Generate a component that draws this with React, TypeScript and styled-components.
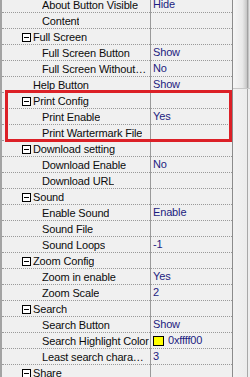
import React from "react";
import styled, { createGlobalStyle } from "styled-components";

const Global = createGlobalStyle`
  html, body { margin: 0; padding: 0; background: #f0f0f0; }
  body { font-family: "Liberation Sans", Arial, sans-serif; }
`;

const Frame = styled.div`
  position: relative;
  width: 250px;
  height: 377px;
  overflow: hidden;
  display: flex;
  background: #f0f0f0;
`;

const Grid = styled.div`
  flex: 1;
  display: flex;
  flex-direction: column;
  margin-top: -3px;
  border-left: 2px solid #a3a3a3;
  border-right: 1px solid #8c8c8c;
`;

const Row = styled.div`
  display: grid;
  grid-template-columns: 149px 1fr;
  height: 16px;
  flex: none;
  box-sizing: border-box;
  border-bottom: 1px dotted #9a9a9a;
  font-size: 11px;
  line-height: 15px;
  letter-spacing: -0.15px;
`;

const NameCell = styled.div<{ $indent: number }>`
  display: flex;
  align-items: center;
  padding-left: ${(p) => p.$indent}px;
  padding-right: 1px;
  color: #0c0c0c;
  white-space: nowrap;
  overflow: hidden;
  border-right: 1px solid #9a9a9a;
  margin-bottom: -1px;
`;

const NameText = styled.span`
  overflow: hidden;
  text-overflow: ellipsis;
  white-space: nowrap;
`;

const ValueCell = styled.div`
  display: flex;
  align-items: center;
  gap: 4px;
  padding-left: 2px;
  color: #1c1c80;
  white-space: nowrap;
  overflow: hidden;
`;

const Expander = styled.span`
  position: relative;
  width: 9px;
  height: 9px;
  box-sizing: border-box;
  border: 1px solid #000;
  background: #fff;
  margin-right: 2px;
  flex: none;
  &::after {
    content: "";
    position: absolute;
    left: 1px;
    right: 1px;
    top: 3px;
    height: 1px;
    background: #000;
  }
`;

const Swatch = styled.span<{ $color: string }>`
  width: 11px;
  height: 10px;
  box-sizing: border-box;
  border: 1px solid #000;
  background: ${(p) => p.$color};
  flex: none;
`;

const Scrollbar = styled.div`
  width: 17px;
  flex: none;
  display: flex;
  flex-direction: column;
  background: linear-gradient(to right, #f2f2f2 0%, #ececec 80%, #a8a8a8 85%, #a8a8a8 88%, #eeeeee 90%);
`;

const Thumb = styled.div`
  height: 88px;
  background: linear-gradient(to right, #f6f6f6 0%, #e9e9e9 55%, #cfcfcf 75%, #c4c4c4 82%, #9a9a9a 86%, #9a9a9a 90%, #e2e2e2 92%);
  border-bottom: 1px solid #c8c8c8;
`;

const Highlight = styled.div`
  position: absolute;
  left: 5px;
  top: 90px;
  width: 227px;
  height: 52px;
  box-sizing: border-box;
  border: 3px solid #dc2027;
  pointer-events: none;
`;

type Item = {
  label: string;
  value?: string;
  kind: "cat" | "child" | "top";
  color?: string;
};

const items: Item[] = [
  { label: "About Button Visible", value: "Hide", kind: "child" },
  { label: "Content", kind: "child" },
  { label: "Full Screen", kind: "cat" },
  { label: "Full Screen Button", value: "Show", kind: "child" },
  { label: "Full Screen Without Frame", value: "No", kind: "child" },
  { label: "Help Button", value: "Show", kind: "top" },
  { label: "Print Config", kind: "cat" },
  { label: "Print Enable", value: "Yes", kind: "child" },
  { label: "Print Wartermark File", kind: "child" },
  { label: "Download setting", kind: "cat" },
  { label: "Download Enable", value: "No", kind: "child" },
  { label: "Download URL", kind: "child" },
  { label: "Sound", kind: "cat" },
  { label: "Enable Sound", value: "Enable", kind: "child" },
  { label: "Sound File", kind: "child" },
  { label: "Sound Loops", value: "-1", kind: "child" },
  { label: "Zoom Config", kind: "cat" },
  { label: "Zoom in enable", value: "Yes", kind: "child" },
  { label: "Zoom Scale", value: "2", kind: "child" },
  { label: "Search", kind: "cat" },
  { label: "Search Button", value: "Show", kind: "child" },
  { label: "Search Highlight Color", value: "0xffff00", kind: "child", color: "#ffff00" },
  { label: "Least search characters", value: "3", kind: "child" },
  { label: "Share", kind: "cat" },
  { label: "Share Button", value: "Show", kind: "child" },
];

const indentFor = (k: Item["kind"]) => (k === "cat" ? 20 : k === "top" ? 31 : 40);

export default function App() {
  return (
    <>
      <Global />
      <Frame>
        <Grid>
          {items.map((it, i) => (
            <Row key={i}>
              <NameCell $indent={indentFor(it.kind)}>
                {it.kind === "cat" && <Expander />}
                <NameText>{it.label}</NameText>
              </NameCell>
              <ValueCell>
                {it.color && <Swatch $color={it.color} />}
                {it.value}
              </ValueCell>
            </Row>
          ))}
        </Grid>
        <Scrollbar>
          <Thumb />
        </Scrollbar>
        <Highlight />
      </Frame>
    </>
  );
}
